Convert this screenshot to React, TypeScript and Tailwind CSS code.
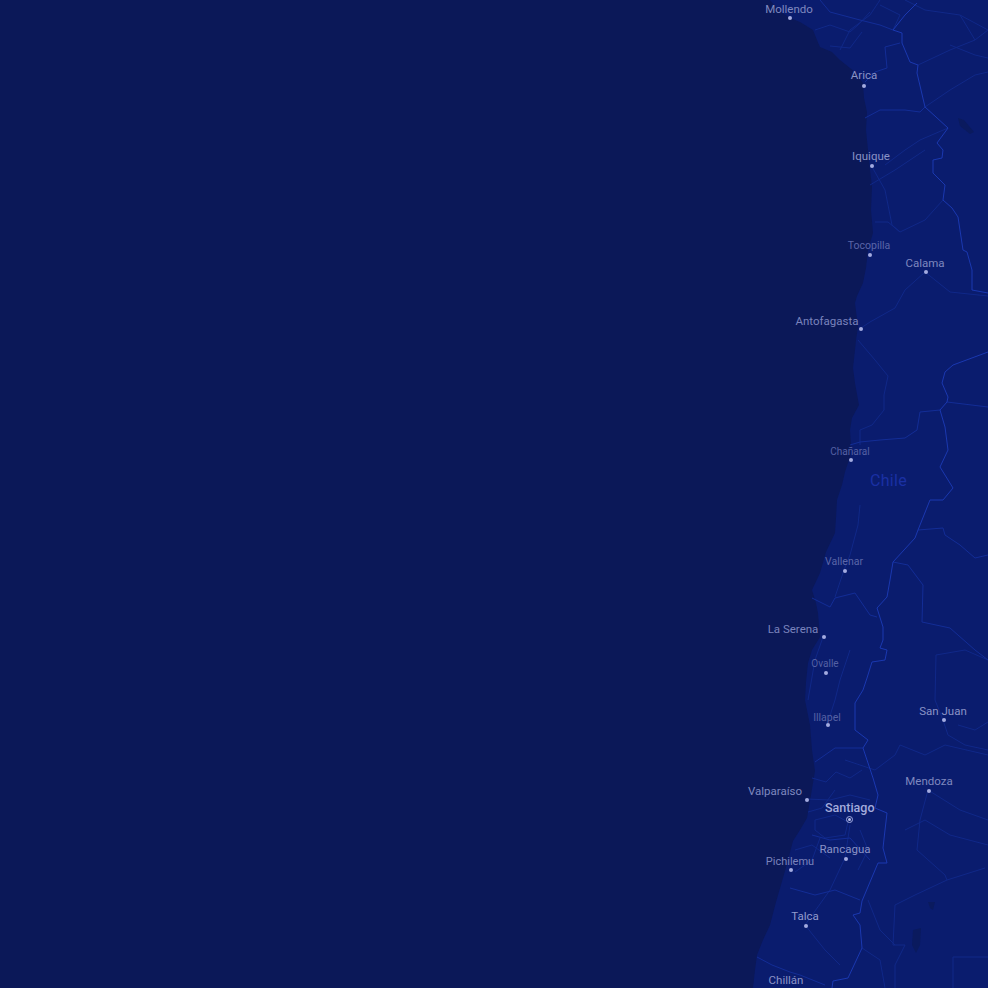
const land =
  "M770 0 L778 10 L790 18 L800 22 L813 30 L817 40 L820 47 L832 52 L840 60 L855 72 L863 83 L864 98 L867 112 L866 130 L868 150 L870 170 L872 187 L871 210 L873 233 L868 250 L866 268 L863 283 L857 296 L855 303 L858 327 L856 340 L855 350 L853 368 L855 383 L859 405 L852 418 L850 430 L851 445 L850 457 L845 472 L842 485 L837 500 L836 518 L835 533 L826 552 L820 573 L812 590 L816 603 L818 613 L820 637 L812 650 L808 663 L806 682 L805 700 L810 725 L812 750 L815 771 L811 795 L807 818 L800 830 L793 841 L788 860 L783 878 L776 902 L770 925 L763 940 L757 955 L755 970 L753 988 L988 988 L988 0 Z";

const mainBorders = [
  "M917 3 L905 15 L893 30 L902 33 L902 43 L910 62 L918 65 L917 73 L921 90 L925 107 L936 117 L948 128 L937 143 L943 150 L942 158 L933 160 L933 173 L945 185 L943 200 L952 208 L958 217 L963 250 L967 252 L972 270 L972 290 L988 293",
  "M988 352 L953 365 L945 372 L942 383 L948 397 L947 402 L940 410 L945 427 L948 450 L940 467 L953 488 L943 500 L930 500 L924 515 L918 530 L915 538 L904 550 L893 562 L890 580 L887 597 L877 608 L883 627 L883 640 L880 648 L887 650 L885 660 L872 662 L867 678 L863 690 L855 703 L855 730 L868 740 L863 748 L873 778 L878 795 L875 808 L887 813 L885 830 L883 848 L887 863 L878 863 L870 882 L862 901 L860 913 L853 915 L860 925 L862 948 L848 978 L833 981 L832 988",
];

const midBorders = [
  "M947 402 L988 407",
  "M940 410 L920 412 L917 430 L905 438 L880 440 L860 442 L850 445",
  "M918 530 L943 528 L945 535 L960 545 L975 558 L988 555",
  "M893 562 L908 565 L923 585 L922 622 L950 628 L975 650 L988 660",
  "M812 598 L830 607 L835 598 L855 593 L870 615 L877 617",
  "M893 30 L880 25 L860 20 L830 12 L820 0",
  "M865 118 L880 110 L905 110 L920 112 L925 107",
  "M900 43 L885 47 L887 68 L875 72 L865 82",
  "M815 762 L835 748 L863 748",
  "M790 888 L815 895 L835 890 L860 900",
  "M757 957 L772 965 L790 972 L800 975 L825 985",
  "M812 835 L830 840 L850 838 L870 860",
];

const faintLines = [
  "M925 272 L905 290 L895 308 L870 322 L861 328",
  "M925 272 L950 292 L988 296",
  "M858 340 L875 360 L888 376 L884 395 L884 410 L872 425 L860 430 L860 445",
  "M860 505 L858 525 L850 555 L844 570 L835 597",
  "M871 165 L885 190 L892 225 L900 232 L925 220 L943 200",
  "M900 232 L888 222 L875 222",
  "M948 128 L920 140 L905 150 L885 165",
  "M918 65 L950 50 L975 40 L988 30",
  "M925 107 L950 90 L975 75 L988 72",
  "M950 45 L975 55 L988 58",
  "M893 30 L900 15 L880 5",
  "M840 50 L850 30 L870 15 L880 0",
  "M905 0 L925 10 L960 15 L988 30",
  "M870 185 L895 170 L925 150",
  "M827 725 L835 700 L840 680 L850 650",
  "M823 637 L815 660 L808 700",
  "M850 825 L845 858 L830 890 L805 925 L825 950 L840 965",
  "M928 790 L920 820 L917 850 L945 875 L947 880 L985 868",
  "M947 880 L915 895 L895 905 L893 945 L905 945 L895 965 L895 988",
  "M928 790 L960 810 L988 820",
  "M845 760 L860 765 L875 770 L895 755 L900 745 L925 755 L945 745 L988 755",
  "M807 799 L830 800 L850 795 L870 800",
  "M815 820 L835 815 L848 822 L845 835 L825 838 L815 830 Z",
  "M795 850 L812 845 L830 858",
  "M953 988 L953 957 L988 957",
  "M943 720 L948 735 L965 745 L988 750",
  "M936 655 L935 700 L943 720",
  "M936 655 L965 650 L988 660",
  "M958 725 L975 730 L988 722",
  "M975 40 L960 15",
  "M815 30 L830 25 L850 32 L858 25 L870 12",
  "M862 32 L850 48 L830 46",
  "M812 778 L826 782 L836 772 L850 778 L862 770",
  "M808 812 L822 808 L835 790",
  "M820 838 L812 860 L795 872",
  "M860 830 L868 850 L858 870",
  "M868 900 L880 930 L895 945",
  "M905 830 L925 820 L950 835 L988 845",
  "M862 948 L880 960 L885 988",
];

const places = [
  { name: "Mollendo", x: 789, y: 10, px: 789, py: 17, tone: "text-[#7f88bf]", size: "text-[11.5px]" },
  { name: "Arica", x: 864, y: 76, px: 863, py: 85, tone: "text-[#8a93c6]", size: "text-[11.5px]" },
  { name: "Iquique", x: 871, y: 157, px: 871, py: 165, tone: "text-[#8a93c6]", size: "text-[11.5px]" },
  { name: "Tocopilla", x: 869, y: 246, px: 869, py: 254, tone: "text-[#5b66a8]", size: "text-[10.5px]" },
  { name: "Calama", x: 925, y: 264, px: 925, py: 271, tone: "text-[#7f88bf]", size: "text-[11.5px]" },
  { name: "Antofagasta", x: 827, y: 322, px: 860, py: 328, tone: "text-[#7a83bc]", size: "text-[11.5px]" },
  { name: "Chañaral", x: 850, y: 452, px: 850, py: 459, tone: "text-[#5561a4]", size: "text-[10px]" },
  { name: "Vallenar", x: 844, y: 562, px: 844, py: 570, tone: "text-[#5b66a8]", size: "text-[10.5px]" },
  { name: "La Serena", x: 793, y: 630, px: 823, py: 636, tone: "text-[#7a83bc]", size: "text-[11.5px]" },
  { name: "Ovalle", x: 825, y: 664, px: 825, py: 672, tone: "text-[#5561a4]", size: "text-[10px]" },
  { name: "Illapel", x: 827, y: 718, px: 827, py: 724, tone: "text-[#5561a4]", size: "text-[10.5px]" },
  { name: "San Juan", x: 943, y: 712, px: 943, py: 719, tone: "text-[#8a93c6]", size: "text-[11.5px]" },
  { name: "Mendoza", x: 929, y: 782, px: 928, py: 790, tone: "text-[#7f88bf]", size: "text-[11.5px]" },
  { name: "Valparaíso", x: 775, y: 792, px: 806, py: 799, tone: "text-[#7f88bf]", size: "text-[11.5px]" },
  { name: "Rancagua", x: 845, y: 850, px: 845, py: 858, tone: "text-[#8a93c6]", size: "text-[11.5px]" },
  { name: "Pichilemu", x: 790, y: 861, px: 790, py: 869, tone: "text-[#7a83bc]", size: "text-[11px]" },
  { name: "Talca", x: 805, y: 917, px: 805, py: 925, tone: "text-[#929bcd]", size: "text-[11.5px]" },
  { name: "Chillán", x: 786, y: 981, px: 0, py: 0, tone: "text-[#8a93c6]", size: "text-[11.5px]" },
];

export default function App() {
  return (
    <div className="relative h-[988px] w-[988px] overflow-hidden bg-[#0b1858] font-['Roboto',sans-serif]">
      {/* Base map */}
      <svg viewBox="0 0 988 988" className="absolute inset-0 h-full w-full blur-[0.4px]" fill="none" strokeLinejoin="round">
        <path d={land} fill="#0a1c6e" />
        {faintLines.map((d, i) => (
          <path key={i} d={d} stroke="#102888" strokeWidth="1" />
        ))}
        {midBorders.map((d, i) => (
          <path key={i} d={d} stroke="#132d96" strokeWidth="1" />
        ))}
        {mainBorders.map((d, i) => (
          <path key={i} d={d} stroke="#1a38b0" strokeWidth="1" />
        ))}
        {/* Dark salt flats */}
        <path d="M958 118 L964 120 L974 132 L970 134 L960 126 Z" fill="#0a1a5e" />
        <path d="M913 930 L921 928 L920 945 L916 953 L912 945 Z" fill="#0a1a5e" />
        <path d="M928 902 L935 902 L933 910 L930 908 Z" fill="#0a1a5e" />
      </svg>

      {/* Country label */}
      <span className="absolute left-[870px] top-[471px] text-[16px] leading-5 tracking-[0.3px] text-[#1a30a4]">
        Chile
      </span>

      {/* Cities */}
      {places.map((p) => (
        <div key={p.name}>
          <span
            className={`absolute -translate-x-1/2 -translate-y-1/2 whitespace-nowrap leading-none ${p.tone} ${p.size}`}
            style={{ left: p.x, top: p.y }}
          >
            {p.name}
          </span>
          {p.py > 0 && (
            <span
              className="absolute h-1 w-1 -translate-x-1/2 -translate-y-1/2 rounded-full bg-[#a3abe0]"
              style={{ left: p.px + 0.5, top: p.py + 0.5 }}
            />
          )}
        </div>
      ))}

      {/* Capital */}
      <span className="absolute left-[825px] top-[801px] text-[12.5px] font-medium leading-[14px] text-[#a3abdc]">
        Santiago
      </span>
      <span className="absolute left-[846px] top-[816px] flex h-[7px] w-[7px] items-center justify-center rounded-full border border-[#a3abe0]">
        <span className="h-[3px] w-[3px] rounded-full bg-[#b8bfea]" />
      </span>
    </div>
  );
}
